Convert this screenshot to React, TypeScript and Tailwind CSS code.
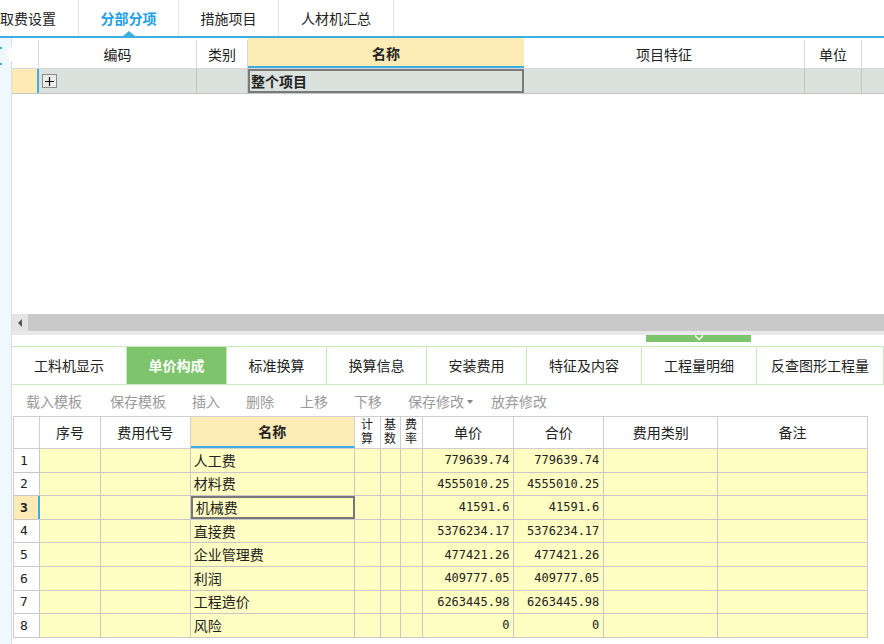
import React from "react";

const topTabs = [
  { label: "取费设置", w: "w-[79px]", cls: "justify-start" },
  { label: "分部分项", w: "w-[100px]", active: true },
  { label: "措施项目", w: "w-[100px]" },
  { label: "人材机汇总", w: "w-[115px]" },
];

const bottomTabs = [
  { label: "工料机显示", w: "w-[115px]" },
  { label: "单价构成", w: "w-[100px]", active: true },
  { label: "标准换算", w: "w-[100px]" },
  { label: "换算信息", w: "w-[100px]" },
  { label: "安装费用", w: "w-[100px]" },
  { label: "特征及内容", w: "w-[115px]" },
  { label: "工程量明细", w: "w-[115px]" },
  { label: "反查图形工程量", w: "w-[127px]" },
];

const tools = ["载入模板", "保存模板", "插入", "删除", "上移", "下移"];

const rows = [
  { n: 1, name: "人工费", v: "779639.74" },
  { n: 2, name: "材料费", v: "4555010.25" },
  { n: 3, name: "机械费", v: "41591.6" },
  { n: 4, name: "直接费", v: "5376234.17" },
  { n: 5, name: "企业管理费", v: "477421.26" },
  { n: 6, name: "利润", v: "409777.05" },
  { n: 7, name: "工程造价", v: "6263445.98" },
  { n: 8, name: "风险", v: "0" },
];

function Stacked({ text }: { text: string }) {
  return <span className="w-[12px] text-[12px] leading-[14px] break-all text-center">{text}</span>;
}

export default function App() {
  return (
    <div className="w-[884px] h-[644px] overflow-hidden bg-white flex flex-col text-[14px] text-[#222] font-['Noto_Sans_CJK_SC','Noto_Sans',sans-serif]">
      {/* top tabs */}
      <div className="relative flex h-[38px] shrink-0 border-b-2 border-[#3eaee2]">
        {topTabs.map((t) => (
          <div
            key={t.label}
            className={`${t.w} h-full flex items-center border-r border-[#e4e4e4] ${
              t.cls ?? "justify-center"
            } ${t.active ? "text-[#1ea0e6] font-bold" : ""}`}
          >
            {t.label}
          </div>
        ))}
        <div className="absolute left-[123px] bottom-0 w-0 h-0 border-x-[6px] border-x-transparent border-b-[5px] border-b-[#3eaee2]" />
      </div>

      <div className="flex flex-1 min-h-0">
        {/* left strip */}
        <div className="relative w-[12px] shrink-0 bg-[#eef8fe] border-r border-[#dcdcdc]">
          <svg className="absolute left-0 top-[6px]" width="12" height="30" viewBox="0 0 12 30">
            <path d="M12 2 L6 10 L12 18 Z" fill="#ffffff" />
            <rect x="0" y="3" width="2" height="2" fill="#3eaee2" />
            <rect x="0" y="19" width="2" height="2" fill="#3eaee2" />
          </svg>
        </div>

        <div className="flex-1 flex flex-col min-w-0">
          {/* top grid header */}
          <div className="flex h-[31px] shrink-0 border-b border-[#d6d6d6] pt-[2px]">
            <div className="w-[27px] border-r border-[#d6d6d6]" />
            <div className="w-[158px] border-r border-[#d6d6d6] flex items-center justify-center">编码</div>
            <div className="w-[51px] border-r border-[#d6d6d6] flex items-center justify-center">类别</div>
            <div className="w-[276px] bg-[#feecb6] border-b-2 border-[#3eaee2] flex items-center justify-center font-bold -mt-[2px] pt-[2px]">名称</div>
            <div className="w-[281px] border-r border-[#d6d6d6] flex items-center justify-center">项目特征</div>
            <div className="w-[57px] border-r border-[#d6d6d6] flex items-center justify-center">单位</div>
            <div className="flex-1" />
          </div>
          {/* top grid row */}
          <div className="flex h-[25px] shrink-0 bg-[#dbe2de] border-b border-[#c4c4c4]">
            <div className="w-[27px] bg-[#feeab4] border-r-2 border-[#3eaee2]" />
            <div className="w-[158px] border-r border-[#c4c4c4] flex items-center pl-[3px]">
              <div className="w-[15px] h-[14px] border border-[#8a8a8a] bg-[#ececec] flex items-center justify-center">
                <svg width="9" height="9" viewBox="0 0 9 9">
                  <path d="M4.5 0 V9 M0 4.5 H9" stroke="#111" strokeWidth="1.2" />
                </svg>
              </div>
            </div>
            <div className="w-[51px] border-r border-[#c4c4c4]" />
            <div className="w-[276px] border-2 border-[#7a7a7a] flex items-center font-bold pl-[1px]">整个项目</div>
            <div className="w-[281px] border-r border-[#c4c4c4]" />
            <div className="w-[57px] border-r border-[#c4c4c4]" />
            <div className="flex-1" />
          </div>
          <div className="h-[220px] shrink-0" />

          {/* horizontal scrollbar */}
          <div className="flex h-[17px] shrink-0 bg-[#c9c9c9]">
            <div className="w-[16px] bg-[#e4e4e4] flex items-center justify-center">
              <div className="w-0 h-0 border-y-[4px] border-y-transparent border-r-[4px] border-r-[#555]" />
            </div>
          </div>
          {/* splitter */}
          <div className="h-[4px] shrink-0 bg-[#e8e8e8]" />
          <div className="h-[11px] shrink-0 flex">
            <div className="ml-[634px] w-[105px] h-[7px] bg-[#7ec46c] flex justify-center">
              <svg width="10" height="6" viewBox="0 0 10 6">
                <path d="M1 0.5 L5 4.5 L9 0.5" stroke="#ffffff" strokeWidth="1.3" fill="none" />
              </svg>
            </div>
          </div>

          {/* bottom tabs */}
          <div className="flex h-[39px] shrink-0 border-y border-[#c5edbb]">
            {bottomTabs.map((t) => (
              <div
                key={t.label}
                className={`${t.w} shrink-0 h-full flex items-center justify-center border-r border-[#c5edbb] ${
                  t.active ? "bg-[#7ec46c] text-white font-bold" : ""
                }`}
              >
                {t.label}
              </div>
            ))}
          </div>

          {/* toolbar */}
          <div className="flex items-center h-[31px] shrink-0 pl-[14px] pt-[2px] gap-[26px] text-[#9a9a9a]">
            {tools.map((t, i) => (
              <span key={t} className={i === 1 ? "ml-[2px]" : ""}>
                {t}
              </span>
            ))}
            <span className="flex items-center gap-[3px]">
              保存修改
              <span className="w-0 h-0 border-x-[3px] border-x-transparent border-t-[4px] border-t-[#888]" />
            </span>
            <span className="-ml-[8px]">放弃修改</span>
          </div>

          {/* bottom grid */}
          <div className="ml-[1px] w-[855px] border-l border-t border-[#cfcfcf]">
            <div className="flex h-[32px] border-b border-[#cfcfcf]">
              <div className="w-[26px] border-r border-[#cfcfcf]" />
              <div className="w-[61px] border-r border-[#cfcfcf] flex items-center justify-center">序号</div>
              <div className="w-[90px] border-r border-[#cfcfcf] flex items-center justify-center">费用代号</div>
              <div className="w-[164px] bg-[#feecb6] border-r border-[#cfcfcf] border-b-2 border-b-[#3eaee2] flex items-center justify-center font-bold">名称</div>
              <div className="w-[26px] border-r border-[#cfcfcf] flex justify-center"><Stacked text="计算" /></div>
              <div className="w-[20px] border-r border-[#cfcfcf] flex justify-center"><Stacked text="基数" /></div>
              <div className="w-[22px] border-r border-[#cfcfcf] flex justify-center"><Stacked text="费率" /></div>
              <div className="w-[92px] border-r border-[#cfcfcf] flex items-center justify-center">单价</div>
              <div className="w-[90px] border-r border-[#cfcfcf] flex items-center justify-center">合价</div>
              <div className="w-[114px] border-r border-[#cfcfcf] flex items-center justify-center">费用类别</div>
              <div className="w-[150px] border-r border-[#cfcfcf] flex items-center justify-center">备注</div>
            </div>
            {rows.map((r) => {
              const sel = r.n === 3;
              return (
                <div key={r.n} className="flex h-[23.6px] border-b border-[#c8c8c8] bg-[#fffdc1]">
                  <div
                    className={`w-[26px] flex items-center pl-[6px] text-[13px] font-['DejaVu_Sans_Mono',monospace] ${
                      sel ? "bg-[#feeab4] font-bold border-r-2 border-[#3eaee2]" : "bg-white border-r border-[#c8c8c8]"
                    }`}
                  >
                    {r.n}
                  </div>
                  <div className="w-[61px] border-r border-[#c8c8c8]" />
                  <div className="w-[90px] border-r border-[#c8c8c8]" />
                  <div
                    className={`w-[164px] flex items-center pl-[3px] ${
                      sel ? "border-2 border-[#777]" : "border-r border-[#c8c8c8]"
                    }`}
                  >
                    {r.name}
                  </div>
                  <div className="w-[26px] border-r border-[#c8c8c8]" />
                  <div className="w-[20px] border-r border-[#c8c8c8]" />
                  <div className="w-[22px] border-r border-[#c8c8c8]" />
                  <div className="w-[92px] border-r border-[#c8c8c8] flex items-center justify-end pr-[4px] text-[12px] font-['DejaVu_Sans_Mono',monospace]">
                    {r.v}
                  </div>
                  <div className="w-[90px] border-r border-[#c8c8c8] flex items-center justify-end pr-[4px] text-[12px] font-['DejaVu_Sans_Mono',monospace]">
                    {r.v}
                  </div>
                  <div className="w-[114px] border-r border-[#c8c8c8]" />
                  <div className="w-[150px] border-r border-[#c8c8c8]" />
                </div>
              );
            })}
          </div>
        </div>
      </div>
    </div>
  );
}
